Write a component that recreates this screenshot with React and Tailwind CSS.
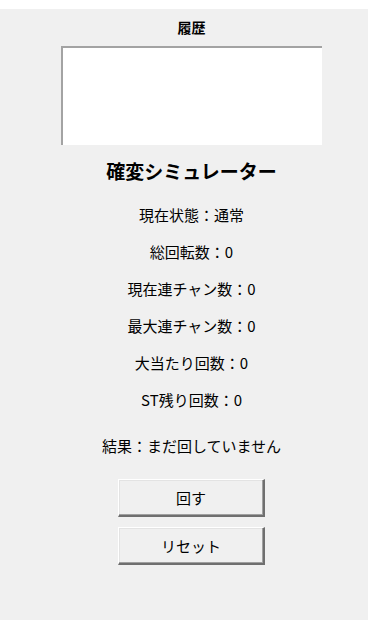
const font = { fontFamily: '"Noto Sans CJK JP", "Noto Sans", sans-serif' }

const stats = [
  '現在状態：通常',
  '総回転数：0',
  '現在連チャン数：0',
  '最大連チャン数：0',
  '大当たり回数：0',
  'ST残り回数：0',
]

function WinButton({ children }) {
  return (
    <button className="w-[147px] h-[38px] bg-[#f0f0f0] border-t border-l border-white border-b-2 border-r-2 border-b-[#6f6f6f] border-r-[#6f6f6f] shadow-[inset_-1px_-1px_0_#a0a0a0,inset_1px_1px_0_#e3e3e3] text-[15px] text-black leading-5">
      {children}
    </button>
  )
}

export default function App() {
  return (
    <div className="bg-white pt-[9px] w-[368px]" style={font}>
      <div className="bg-[#f0f0f0] min-h-[611px] flex flex-col items-center pt-[8px] pl-[15px] text-black">
        <h2 className="text-[14px] font-bold leading-5">履歴</h2>
        <div className="mt-[9px] w-[261px] h-[99px] bg-white border-t-2 border-l-2 border-[#a3a3a3]" />
        <h1 className="mt-[14px] text-[19px] font-bold leading-6">確変シミュレーター</h1>
        <div className="mt-[22px] flex flex-col items-center gap-[17px]">
          {stats.map((s) => (
            <p key={s} className="text-[15px] leading-5">{s}</p>
          ))}
        </div>
        <p className="mt-[26px] text-[15px] leading-5">結果：まだ回していません</p>
        <div className="mt-[23px] flex flex-col gap-[10px]">
          <WinButton>回す</WinButton>
          <WinButton>リセット</WinButton>
        </div>
      </div>
    </div>
  )
}
